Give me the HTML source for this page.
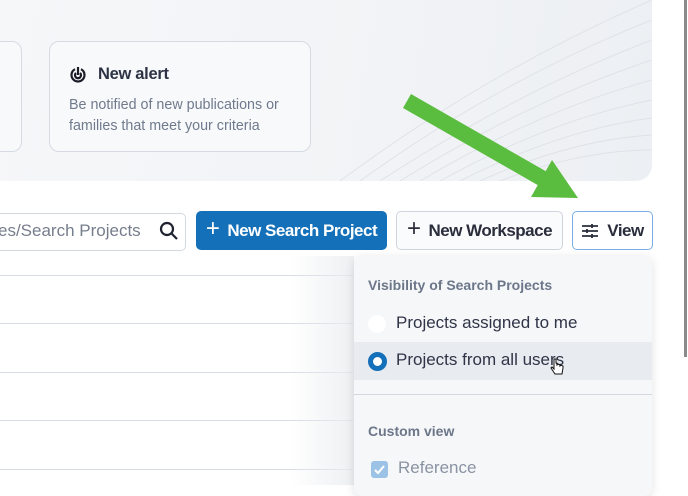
<!DOCTYPE html>
<html><head><meta charset="utf-8"><style>
*{box-sizing:border-box;margin:0;padding:0}
body{width:688px;height:485px;overflow:hidden;background:#fff;font-family:"Liberation Sans",sans-serif;position:relative}
.hero{position:absolute;left:0;top:0;width:652px;height:181px;background:linear-gradient(100deg,#f6f7f9 0%,#f1f3f6 60%,#eceff3 100%);border-bottom-right-radius:16px;overflow:hidden}
.card{position:absolute;top:41px;height:111px;background:#f8f9fb;border:1px solid #d6dbe3;border-radius:10px}
.t{position:absolute;color:#2d3345;font-size:16.5px;font-weight:bold;letter-spacing:-0.3px}
.d{position:absolute;color:#6f7a8d;font-size:14.3px;line-height:21px}
.btn{position:absolute;top:211px;height:39px;border-radius:5px;font-size:17px;font-weight:bold;letter-spacing:-0.5px;display:flex;align-items:center;justify-content:center}
.row{position:absolute;left:0;width:354px;height:1px;background:#d8dde5}
.menu{position:absolute;left:354px;top:256px;width:298px;height:240px;background:#f6f7f9;border-radius:8px;box-shadow:0 2px 10px rgba(0,0,0,.12)}
.mi{position:absolute;left:0;width:298px;font-size:17px;color:#2f3447}
.h{position:absolute;left:14px;font-size:14px;font-weight:bold;color:#6c778a}
</style></head><body>
<div class="hero">
<svg width="652" height="181" style="position:absolute;left:0;top:0" fill="none" stroke="#dfe3e9" stroke-width="1">
<path d="M360 181 Q500 80 652 20"/><path d="M380 181 Q520 90 652 40"/><path d="M400 181 Q530 100 652 60"/><path d="M420 181 Q540 110 652 80"/><path d="M440 181 Q550 120 652 100"/><path d="M460 181 Q560 130 652 118"/><path d="M480 181 Q570 140 652 135"/><path d="M340 181 Q490 70 652 0"/><path d="M500 181 Q580 150 652 150"/>
</svg>
<div class="card" style="left:-20px;width:42px"></div>
<div class="card" style="left:49px;width:262px">
<svg style="position:absolute;left:19px;top:24px" width="18" height="18" viewBox="0 0 18 18" fill="none" stroke="#1a1d26" stroke-width="2.2"><path d="M6 3.2A6.5 6.5 0 1 0 12 3.2"/><path d="M7 7A3 3 0 1 0 11 7"/><path d="M9 1v8"/></svg>
<div class="t" style="left:48px;top:23px">New alert</div>
<div class="d" style="left:19px;top:53px">Be notified of new publications or<br>families that meet your criteria</div>
</div>
</div>
<div style="position:absolute;left:684px;top:0;width:3px;height:357px;background:#8a8a8a"></div>
<svg width="688" height="485" style="position:absolute;left:0;top:0;z-index:5">
<line x1="407" y1="101" x2="545" y2="180" stroke="#5bbd3f" stroke-width="16"/>
<polygon points="531,197 552,160 578,198" fill="#5bbd3f"/>
</svg>
<div style="position:absolute;left:-10px;top:213px;width:196px;height:38px;border:1px solid #d4d9e1;border-radius:5px"></div>
<div style="position:absolute;left:-2px;top:221px;font-size:17px;color:#767d8c">es/Search Projects</div>
<svg style="position:absolute;left:159px;top:221px" width="20" height="20" viewBox="0 0 20 20" fill="none" stroke="#1e2230" stroke-width="2.2"><circle cx="8" cy="8" r="6"/><path d="M12.5 12.5L18 18"/></svg>
<div class="btn" style="left:196px;width:191px;background:#1470b8;color:#fff"><span style="font-size:24px;font-weight:normal;margin-right:8px;margin-top:-3px">+</span>New Search Project</div>
<div class="btn" style="left:396px;width:167px;background:#fafbfc;border:1px solid #cfd4dc;color:#2a2e3c"><span style="font-size:24px;font-weight:normal;margin-right:8px;margin-top:-3px">+</span>New Workspace</div>
<div class="btn" style="left:572px;width:81px;background:#fff;border:1px solid #79aee6;color:#2a2e3c">
<svg width="18" height="16" viewBox="0 0 18 16" stroke="#2a2e3c" stroke-width="1.8" style="margin-right:8px"><path d="M1 3h16M1 8h16M1 13h16"/><path d="M11 1v4M6 6v4M11 11v4"/></svg>View</div>
<div class="row" style="top:275px"></div><div class="row" style="top:323px"></div><div class="row" style="top:372px"></div><div class="row" style="top:420px"></div><div class="row" style="top:469px"></div>
<div style="position:absolute;left:290px;top:256px;width:64px;height:229px;background:linear-gradient(90deg,rgba(240,241,243,0),rgba(234,236,239,.8))"></div>
<div class="menu">
<div class="h" style="top:21px">Visibility of Search Projects</div>
<div class="mi" style="top:50px;height:36px"><div style="position:absolute;left:14px;top:9px;width:18px;height:18px;border-radius:50%;background:#fff"></div><span style="position:absolute;left:42px;top:7px">Projects assigned to me</span></div>
<div class="mi" style="top:86px;height:38px;background:#e8ebef"><div style="position:absolute;left:14px;top:10px;width:19px;height:19px;border-radius:50%;border:5px solid #1470b8;background:#fff"></div><span style="position:absolute;left:42px;top:8px">Projects from all users</span>
<svg style="position:absolute;left:196px;top:15px" width="14" height="20" viewBox="0 0 14 20"><path d="M4 2v10l-2-2-1 1 4 6h7l1-6V9l-2-1-1 1V8l-2-1-1 1V7L6 6V2z" fill="#fff" stroke="#111" stroke-width="1"/></svg></div>
<div style="position:absolute;left:0;top:138px;width:298px;height:1px;background:#d3d8e0"></div>
<div class="h" style="top:167px">Custom view</div>
<div style="position:absolute;left:17px;top:205px;width:17px;height:17px;border-radius:3px;background:#9cc3e6"><svg width="17" height="17" viewBox="0 0 17 17"><path d="M4 9l3 3 6-7" stroke="#fff" stroke-width="2" fill="none"/></svg></div>
<div style="position:absolute;left:44px;top:202px;font-size:17px;color:#8a93a3">Reference</div>
</div>
</body></html>
